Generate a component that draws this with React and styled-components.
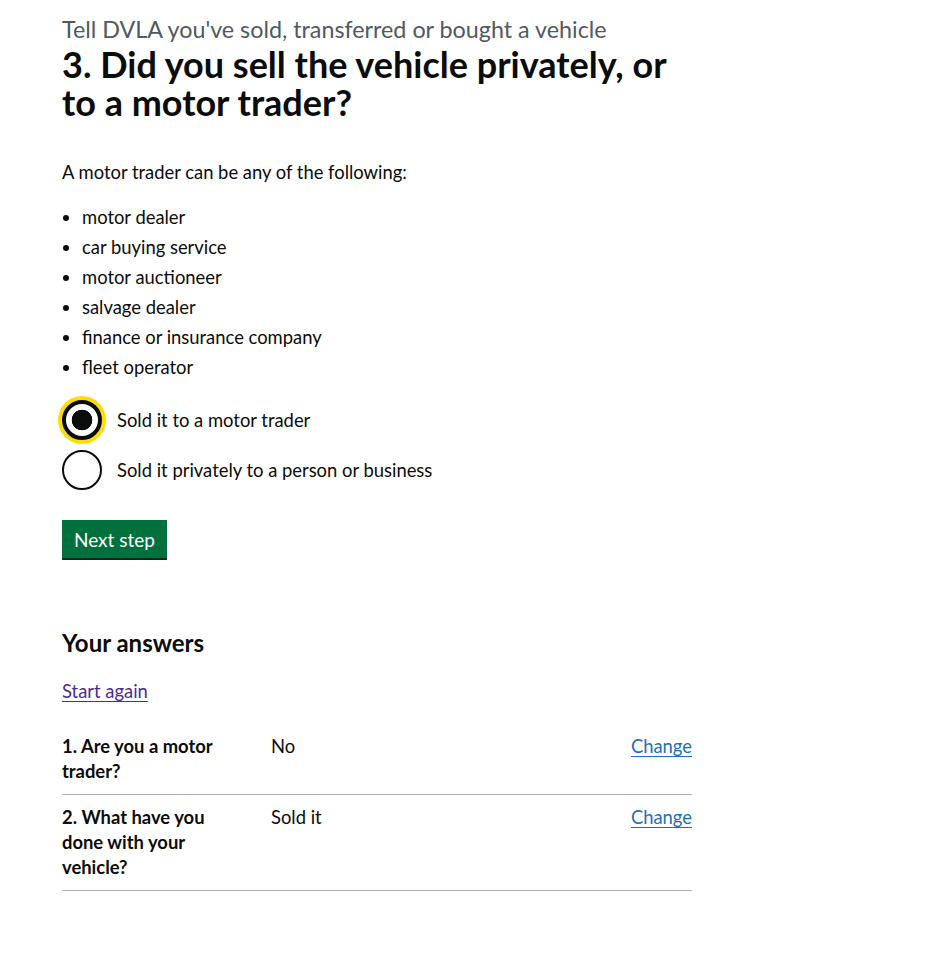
import React, { useState } from "react";
import styled, { createGlobalStyle } from "styled-components";

const GlobalStyle = createGlobalStyle`
  body {
    margin: 0;
    background: #fff;
    color: #0b0c0c;
    font-family: Lato, "Noto Sans", Arial, sans-serif;
  }
`;

const Main = styled.main`
  padding: 17px 0 40px 62px;
`;

const Column = styled.div`
  width: 630px;
`;

const Caption = styled.span`
  display: block;
  font-size: 23.3px;
  line-height: 25px;
  color: #505a5f;
  margin-bottom: 3px;
`;

const Heading = styled.h1`
  margin: 0 0 39px;
  max-width: 620px;
  font-size: 36px;
  line-height: 38px;
  font-weight: 700;
`;

const Body = styled.p`
  margin: 0 0 20px;
  font-size: 18.4px;
  line-height: 25px;
`;

const BulletList = styled.ul`
  margin: 0 0 20px;
  padding-left: 20px;
  font-size: 18.4px;
  line-height: 25px;
  list-style-type: disc;
`;

const BulletItem = styled.li`
  margin-bottom: 5px;
`;

const Radios = styled.fieldset`
  border: 0;
  margin: 0 0 30px;
  padding: 0;
`;

const RadioItem = styled.label`
  display: flex;
  align-items: center;
  gap: 15px;
  min-height: 40px;
  margin-bottom: 10px;
  font-size: 18.4px;
  line-height: 25px;
  cursor: pointer;

  &:last-child {
    margin-bottom: 0;
  }
`;

const RadioInput = styled.input`
  appearance: none;
  box-sizing: border-box;
  flex: none;
  width: 40px;
  height: 40px;
  margin: 0;
  border: 2px solid #0b0c0c;
  border-radius: 50%;
  background: #fff;
  box-shadow: ${(p) => (p.$focused ? "0 0 0 4px #ffdd00" : "none")};
  cursor: pointer;

  &:checked {
    border-width: ${(p) => (p.$focused ? "4px" : "2px")};
    background: radial-gradient(circle, #0b0c0c 0, #0b0c0c 10px, #fff 10.6px);
  }
`;

const Button = styled.button`
  display: inline-block;
  padding: 8px 10px 7px;
  border: 2px solid transparent;
  border-radius: 0;
  margin: 0 0 70px;
  background: #00703c;
  box-shadow: 0 2px 0 #002d18;
  color: #fff;
  font-family: inherit;
  font-size: 19px;
  line-height: 19px;
  cursor: pointer;
`;

const SubHeading = styled.h2`
  margin: 0 0 21px;
  font-size: 24px;
  line-height: 30px;
  font-weight: 700;
`;

const Link = styled.a`
  color: ${(p) => (p.$visited ? "#4c2c92" : "#1d70b8")};
  text-decoration: underline;
  text-decoration-thickness: 1px;
  text-underline-offset: 0.16em;
`;

const LinkPara = styled.p`
  margin: 0 0 20px;
  font-size: 18.4px;
  line-height: 25px;
`;

const SummaryList = styled.dl`
  margin: 0;
  font-size: 18.4px;
  line-height: 25px;
`;

const SummaryRow = styled.div`
  display: grid;
  grid-template-columns: 209px 1fr auto;
  padding: 10px 0;
  border-bottom: 1px solid #b1b4b6;
`;

const Key = styled.dt`
  max-width: 170px;
  font-weight: 700;
`;

const Value = styled.dd`
  margin: 0;
`;

const Action = styled.dd`
  margin: 0;
  text-align: right;
`;

const traders = [
  "motor dealer",
  "car buying service",
  "motor auctioneer",
  "salvage dealer",
  "finance or insurance company",
  "fleet operator",
];

const options = [
  { value: "trader", label: "Sold it to a motor trader" },
  { value: "private", label: "Sold it privately to a person or business" },
];

const answers = [
  { question: "1. Are you a motor trader?", answer: "No" },
  { question: "2. What have you done with your vehicle?", answer: "Sold it" },
];

export default function App() {
  const [choice, setChoice] = useState("trader");

  return (
    <>
      <GlobalStyle />
      <Main>
        <Column>
          <Caption>Tell DVLA you've sold, transferred or bought a vehicle</Caption>
          <Heading>3. Did you sell the vehicle privately, or to a motor trader?</Heading>
          <Body>A motor trader can be any of the following:</Body>
          <BulletList>
            {traders.map((t) => (
              <BulletItem key={t}>{t}</BulletItem>
            ))}
          </BulletList>
          <form onSubmit={(e) => e.preventDefault()}>
            <Radios>
              {options.map((o) => (
                <RadioItem key={o.value}>
                  <RadioInput
                    type="radio"
                    name="sold-to"
                    value={o.value}
                    checked={choice === o.value}
                    $focused={choice === o.value}
                    onChange={() => setChoice(o.value)}
                  />
                  {o.label}
                </RadioItem>
              ))}
            </Radios>
            <Button type="submit">Next step</Button>
          </form>
          <SubHeading>Your answers</SubHeading>
          <LinkPara>
            <Link href="#" $visited>Start again</Link>
          </LinkPara>
          <SummaryList>
            {answers.map((a) => (
              <SummaryRow key={a.question}>
                <Key>{a.question}</Key>
                <Value>{a.answer}</Value>
                <Action>
                  <Link href="#">Change</Link>
                </Action>
              </SummaryRow>
            ))}
          </SummaryList>
        </Column>
      </Main>
    </>
  );
}
